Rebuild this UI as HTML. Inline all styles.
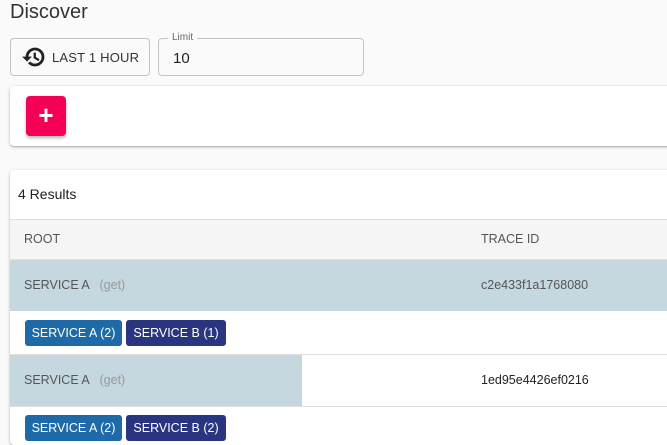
<!DOCTYPE html>
<html style="width:667px;height:445px;overflow:hidden"><head><meta charset="utf-8"><style>
*{box-sizing:border-box;margin:0;padding:0}
body{width:667px;height:445px;overflow:hidden;background:#fafafa;font-family:"Liberation Sans",sans-serif;position:relative;color:#212121}
.abs{position:absolute}
h1{position:absolute;left:10px;top:1px;font-size:20px;font-weight:400;color:#333}
.btn{left:10px;top:38px;width:140px;height:38px;border:1px solid #c4c4c4;border-radius:4px;background:#fafafa;font-size:13px;color:#333;display:flex;align-items:center;padding-left:11px;letter-spacing:.2px}
.fld{left:158px;top:38px;width:206px;height:38px;border:1px solid #c4c4c4;border-radius:4px}
.fld .lab{position:absolute;left:9px;top:-7px;background:#fafafa;padding:0 4px;font-size:10px;color:#666}
.fld .v{position:absolute;left:14px;top:11px;font-size:15px;color:#222}
.card{background:#fff;box-shadow:0 1px 3px rgba(0,0,0,.25),0 1px 1px rgba(0,0,0,.12);border-radius:4px 0 0 4px}
.plus{left:26px;top:96px;width:40px;height:40px;background:#f50057;border-radius:4px;box-shadow:0 2px 3px rgba(0,0,0,.3);color:#fff;font-size:26px;font-weight:700;text-align:center;line-height:38px}
.row{left:10px;width:657px}
.t{font-size:12.5px;color:#555;position:absolute}
.chip{position:absolute;height:26px;border-radius:3px;color:#fff;font-size:12.5px;line-height:26px;text-align:center}
.ca{background:#1e6aa8}.cb{background:#2a3580}
</style></head><body>
<h1>Discover</h1>
<div class="abs btn"><svg width="24" height="24" viewBox="0 0 24 24" style="margin-right:6px"><path fill="#222" stroke="#222" stroke-width="0.8" d="M13 3a9 9 0 0 0-9 9H1l3.89 3.89.07.14L9 12H6c0-3.87 3.130-7 7-7s7 3.13 7 7-3.13 7-7 7c-1.93 0-3.68-.79-4.94-2.06l-1.42 1.42A8.954 8.954 0 0 0 13 21a9 9 0 0 0 0-18zm-1 5v5l4.280 2.54.72-1.21-3.5-2.08V8H12z"/></svg>LAST 1 HOUR</div>
<div class="abs fld"><span class="lab">Limit</span><span class="v">10</span></div>
<div class="abs card" style="left:10px;top:86px;width:667px;height:60px"></div>
<div class="abs plus">+</div>
<div class="abs card" style="left:10px;top:170px;width:667px;height:275px"></div>
<div class="abs" style="left:18px;top:186px;font-size:14px;color:#222">4 Results</div>
<div class="abs row" style="top:219px;height:41px;background:#f5f5f5;border-top:1px solid #e0e0e0;border-bottom:1px solid #e0e0e0"></div>
<div class="t" style="left:24px;top:232px">ROOT</div>
<div class="t" style="left:481px;top:232px">TRACE ID</div>
<div class="abs row" style="top:260px;height:51px;background:#c5d8e0"></div>
<div class="t" style="left:24px;top:278px">SERVICE A &nbsp; <span style="color:#999">(get)</span></div>
<div class="t" style="left:481px;top:278px">c2e433f1a1768080</div>
<div class="chip ca" style="left:25px;top:320px;width:97px">SERVICE A (2)</div>
<div class="chip cb" style="left:126px;top:320px;width:100px">SERVICE B (1)</div>
<div class="abs row" style="top:354px;height:1px;background:#e0e0e0"></div>
<div class="abs" style="left:10px;top:355px;width:292px;height:51px;background:#c5d8e0"></div>
<div class="t" style="left:24px;top:373px">SERVICE A &nbsp; <span style="color:#999">(get)</span></div>
<div class="t" style="left:481px;top:373px;color:#222">1ed95e4426ef0216</div>
<div class="abs row" style="top:406px;height:1px;background:#e0e0e0"></div>
<div class="chip ca" style="left:25px;top:415px;width:97px">SERVICE A (2)</div>
<div class="chip cb" style="left:126px;top:415px;width:100px">SERVICE B (2)</div>
</body></html>
